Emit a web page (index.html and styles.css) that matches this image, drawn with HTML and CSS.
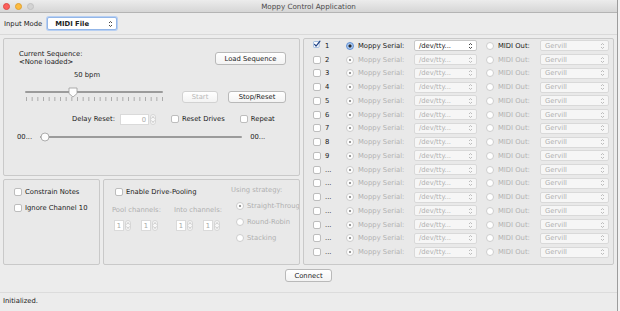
FILE: index.html
```html
<!DOCTYPE html>
<html lang="en">

<head>
    <meta charset="utf-8">
    <title>Moppy Control Application</title>
    <link rel="stylesheet" href="styles.css">
</head>

<body>
    <div class="window">
        <div class="titlebar">
            <div class="lights">
                <span class="light red"></span>
                <span class="light yellow"></span>
                <span class="light off"></span>
            </div>
            <div class="title">Moppy Control Application</div>
            <div></div>
        </div>

        <div class="toolbar">
            <span>Input Mode</span>
            <div class="select focus mode-select">
                <span>MIDI File</span>
                <svg class="arrows" width="5" height="8" viewBox="0 0 5 8"><path d="M1 3 L2.5 1.5 L4 3 M1 5 L2.5 6.5 L4 5" fill="none" stroke="#333" stroke-width="0.9"/></svg>
            </div>
        </div>

        <div class="main">
            <div class="left-col">
                <div class="panel seq-panel">
                    <div class="seq-row">
                        <div class="seq-name">
                            <div>Current Sequence:</div>
                            <div>&lt;None loaded&gt;</div>
                        </div>
                        <div class="btn load-btn">Load Sequence</div>
                    </div>
                    <div class="bpm">50 bpm</div>
                    <div class="tempo-row">
                        <svg class="tempo-slider" width="142" height="16" viewBox="0 0 142 16">
                            <line x1="2" y1="5" x2="138" y2="5" stroke="#9b9b9b" stroke-width="2" stroke-linecap="round"/>
                            <line x1="2" y1="12" x2="139" y2="12" stroke="#acacac" stroke-width="4" stroke-dasharray="1 4.667"/>
                            <path d="M45 1 H53 V6.5 L49 10 L45 6.5 Z" fill="#fdfdfd" stroke="#9a9a9a" stroke-width="0.8"/>
                        </svg>
                        <div class="btn start-btn disabled">Start</div>
                        <div class="btn stop-btn">Stop/Reset</div>
                    </div>
                    <div class="delay-row">
                        <span class="delay-label">Delay Reset:</span>
                        <div class="spin delay-spin">
                            <div class="val">0</div>
                            <div class="step">
                                <svg width="4" height="9" viewBox="0 0 4 9"><path d="M0.5 3.5 L2 1.5 L3.5 3.5 M0.5 5.5 L2 7.5 L3.5 5.5" fill="none" stroke="#bbb" stroke-width="0.8"/></svg>
                            </div>
                        </div>
                        <label class="check-item reset-drives"><span class="box"></span>Reset Drives</label>
                        <label class="check-item repeat"><span class="box"></span>Repeat</label>
                    </div>
                    <div class="pos-row">
                        <span>00...</span>
                        <svg class="pos-slider" width="204" height="10" viewBox="0 0 204 10">
                            <line x1="2" y1="5" x2="202" y2="5" stroke="#9b9b9b" stroke-width="2" stroke-linecap="round"/>
                            <circle cx="6" cy="5" r="4" fill="#fdfdfd" stroke="#9a9a9a" stroke-width="0.8"/>
                        </svg>
                        <span>00...</span>
                    </div>
                </div>

                <div class="bottom-row">
                    <div class="panel filter-panel">
                        <label class="check-item"><span class="box"></span>Constrain Notes</label>
                        <label class="check-item"><span class="box"></span>Ignore Channel 10</label>
                    </div>
                    <div class="panel pool-panel">
                        <div class="pool-left">
                            <label class="check-item"><span class="box"></span>Enable Drive-Pooling</label>
                            <div class="pool-heads">
                                <span>Pool channels:</span>
                                <span>Into channels:</span>
                            </div>
                            <div class="pool-spins">
                                <div class="spin-pair">
                                    <div class="spin"><div class="val">1</div><div class="step"><svg width="4" height="9" viewBox="0 0 4 9"><path d="M0.5 3.5 L2 1.5 L3.5 3.5 M0.5 5.5 L2 7.5 L3.5 5.5" fill="none" stroke="#bbb" stroke-width="0.8"/></svg></div></div>
                                    <div class="spin"><div class="val">1</div><div class="step"><svg width="4" height="9" viewBox="0 0 4 9"><path d="M0.5 3.5 L2 1.5 L3.5 3.5 M0.5 5.5 L2 7.5 L3.5 5.5" fill="none" stroke="#bbb" stroke-width="0.8"/></svg></div></div>
                                </div>
                                <div class="spin-pair">
                                    <div class="spin"><div class="val">1</div><div class="step"><svg width="4" height="9" viewBox="0 0 4 9"><path d="M0.5 3.5 L2 1.5 L3.5 3.5 M0.5 5.5 L2 7.5 L3.5 5.5" fill="none" stroke="#bbb" stroke-width="0.8"/></svg></div></div>
                                    <div class="spin"><div class="val">1</div><div class="step"><svg width="4" height="9" viewBox="0 0 4 9"><path d="M0.5 3.5 L2 1.5 L3.5 3.5 M0.5 5.5 L2 7.5 L3.5 5.5" fill="none" stroke="#bbb" stroke-width="0.8"/></svg></div></div>
                                </div>
                            </div>
                        </div>
                        <div class="pool-right">
                            <div>Using strategy:</div>
                            <label class="radio-item"><span class="radio dot"></span>Straight-Through</label>
                            <label class="radio-item"><span class="radio"></span>Round-Robin</label>
                            <label class="radio-item"><span class="radio"></span>Stacking</label>
                        </div>
                    </div>
                </div>
            </div>

            <div class="panel channels">
                <div class="channel-list"></div>
            </div>
        </div>

        <div class="connect-row">
            <div class="btn connect-btn">Connect</div>
        </div>

        <div class="status">Initialized.</div>
    </div>

    <script>
        const listArea = document.querySelector(".channel-list");
        const names = ["1", "2", "3", "4", "5", "6", "7", "8", "9", "...", "...", "...", "...", "...", "...", "..."];
        const arrowSvg = `<svg class="arrows" width="5" height="8" viewBox="0 0 5 8"><path d="M1 3 L2.5 1.5 L4 3 M1 5 L2.5 6.5 L4 5" fill="none" stroke="currentColor" stroke-width="0.9"/></svg>`;
        const tickSvg = `<svg width="11" height="11" viewBox="0 0 11 11"><rect x="0.5" y="1.5" width="8" height="8" rx="1.5" fill="#fff" stroke="#7fa6d8"/><path d="M2.2 5.2 L4.2 7.6 L9.6 0.8" fill="none" stroke="#1d3f82" stroke-width="1.6" stroke-linecap="round" stroke-linejoin="round"/></svg>`;

        // first channel is switched on, the rest are greyed out
        names.forEach((name, i) => {
            const row = document.createElement("div");
            row.classList.add("ch-row");
            if (i > 0) row.classList.add("disabled");
            const box = i == 0 ? `<span class="ticked">${tickSvg}</span>` : `<span class="box"></span>`;
            row.innerHTML = `
                <label class="ch-check">${box}<span>${name}</span></label>
                <span class="radio ${i == 0 ? "on" : "dot"}"></span>
                <span class="ch-label serial-label">Moppy Serial:</span>
                <div class="select serial-select ${i == 0 ? "" : "off"}"><span>/dev/tty...</span>${arrowSvg}</div>
                <span class="radio"></span>
                <span class="ch-label midi-label">MIDI Out:</span>
                <div class="select midi-select off"><span>Gervill</span>${arrowSvg}</div>`;
            listArea.append(row);
        });
    </script>
</body>

</html>
```

FILE: styles.css
```css
html {
    font-family: 'DejaVu Sans', 'Liberation Sans', sans-serif;
    font-size: 6.8px;
    color: #1a1a1a;
}

body {
    margin: 0px;
    background: #f2f2f2;
}

.window {
    width: 617px;
    height: 311px;
    background: #ececec;
    border-right: 1px solid #9c9c9c;
    display: flex;
    flex-direction: column;
}

.titlebar {
    height: 12px;
    display: grid;
    grid-template-columns: 1fr auto 1fr;
    align-items: center;
    background: linear-gradient(#ececec, #d6d6d6);
    border-bottom: 1px solid #b4b4b4;
}

.lights {
    display: flex;
    gap: 5px;
    padding-left: 3px;
}

.light {
    width: 7px;
    height: 7px;
    border-radius: 50%;
    box-sizing: border-box;
}

.red {
    background: #fc605c;
    border: 0.5px solid #de4a45;
}

.yellow {
    background: #fdbc40;
    border: 0.5px solid #dea032;
}

.off {
    background: #d3d3d3;
    border: 0.5px solid #c2c2c2;
}

.title {
    font-size: 7.2px;
    color: #4b4b4b;
}

.toolbar {
    height: 21px;
    display: flex;
    align-items: center;
    gap: 5px;
    padding-left: 4px;
    border-bottom: 1px solid #d9d9d9;
}

/* fake popup buttons */
.select {
    display: flex;
    align-items: center;
    justify-content: space-between;
    box-sizing: border-box;
    height: 11px;
    padding: 0px 3px 0px 4px;
    background: #fff;
    border: 1px solid #c9c9c9;
    border-radius: 2px;
    color: #222;
}

.select.off {
    background: #f6f6f6;
    border-color: #d9d9d9;
    color: #b0b0b0;
}

.mode-select {
    width: 70px;
    height: 13px;
    padding-left: 7px;
    font-weight: bold;
    border-color: #93b6e8;
    box-shadow: 0px 0px 0px 1px #b7cff2;
}

.main {
    display: flex;
    gap: 3px;
    padding: 3px 3px 0px 3px;
}

.left-col {
    width: 297px;
    display: flex;
    flex-direction: column;
    gap: 3px;
}

.panel {
    box-sizing: border-box;
    border: 1px solid #c9c9c9;
    border-radius: 2px;
    background: #e9e9e9;
}

.seq-panel {
    height: 138px;
    padding: 10px 13px 0px 15px;
}

.seq-row {
    display: flex;
    justify-content: space-between;
}

.seq-name {
    line-height: 8px;
    padding-top: 1px;
}

.btn {
    box-sizing: border-box;
    height: 12px;
    display: flex;
    align-items: center;
    justify-content: center;
    background: linear-gradient(#ffffff, #f3f3f3);
    border: 1px solid #b9b9b9;
    border-radius: 3px;
    color: #222;
}

.btn.disabled {
    color: #b8b8b8;
    border-color: #d2d2d2;
}

.load-btn {
    width: 71px;
    height: 13px;
    margin-top: 3px;
}

.bpm {
    margin: 5px 0px 0px 55px;
    line-height: 9px;
}

.tempo-row {
    display: flex;
    align-items: flex-start;
    margin-top: 7px;
}

.tempo-slider {
    margin-left: 5px;
}

.start-btn {
    width: 36px;
    margin: 4px 0px 0px 16px;
}

.stop-btn {
    width: 58px;
    margin: 4px 0px 0px 10px;
}

.delay-row {
    display: flex;
    align-items: center;
    height: 12px;
    margin-top: 10px;
}

.delay-label {
    margin-left: 53px;
    width: 48px;
}

.spin {
    display: flex;
    align-items: center;
    gap: 1px;
}

.spin .val {
    box-sizing: border-box;
    height: 11px;
    width: 10px;
    padding-right: 2px;
    text-align: right;
    line-height: 10px;
    background: #fff;
    border: 1px solid #dadada;
    color: #aaa;
}

.spin .step {
    box-sizing: border-box;
    width: 6px;
    height: 11px;
    display: flex;
    align-items: center;
    justify-content: center;
    border: 1px solid #d6d6d6;
    border-radius: 3px;
    background: #f7f7f7;
}

.delay-spin .val {
    width: 29px;
}

.check-item {
    display: flex;
    align-items: center;
    gap: 3px;
}

.box {
    box-sizing: border-box;
    width: 8px;
    height: 8px;
    background: #fff;
    border: 1px solid #bdbdbd;
    border-radius: 2px;
}

.reset-drives {
    margin-left: 15px;
}

.repeat {
    margin-left: 15px;
}

.pos-row {
    display: flex;
    align-items: center;
    gap: 7px;
    margin: 7px 0px 0px -2px;
}

.bottom-row {
    height: 86px;
    display: flex;
    gap: 3px;
}

.filter-panel {
    width: 97px;
    padding: 8px 0px 0px 10px;
    display: flex;
    flex-direction: column;
    gap: 8px;
}

.pool-panel {
    width: 197px;
    display: flex;
    padding: 6px 0px 0px 8px;
    overflow: hidden;
    white-space: nowrap;
}

.pool-left {
    width: 119px;
    flex-shrink: 0;
    padding-top: 2px;
}

.pool-left .check-item {
    margin-left: 3px;
}

.pool-heads {
    display: flex;
    gap: 13px;
    margin-top: 10px;
    color: #b0b0b0;
}

.pool-spins {
    display: flex;
    gap: 18px;
    margin: 6px 0px 0px 2px;
}

.spin-pair {
    display: flex;
    gap: 10px;
}

/* strategy list runs past the panel edge, as in the app */
.pool-right {
    display: flex;
    flex-direction: column;
    gap: 8px;
    color: #b0b0b0;
}

.radio-item {
    display: flex;
    align-items: center;
    gap: 3px;
    margin-left: 5px;
}

.radio {
    box-sizing: border-box;
    width: 8px;
    height: 8px;
    flex-shrink: 0;
    border-radius: 50%;
    background: #fff;
    border: 1px solid #cdcdcd;
}

.radio.dot {
    background: radial-gradient(circle, #9a9a9a 0px, #9a9a9a 1px, #fff 1.6px);
}

.radio.on {
    border-color: #5f8fd3;
    background: radial-gradient(circle, #2a2a2a 0px, #2a2a2a 1.2px, #a9c8f2 1.9px);
}

/* channel table */
.channels {
    width: 312px;
    height: 227px;
    padding: 0px 0px 0px 9px;
}

.ch-row {
    height: 13.75px;
    display: flex;
    align-items: center;
}

.ch-check {
    width: 33px;
    display: flex;
    align-items: center;
    gap: 4px;
}

.ticked {
    display: flex;
    width: 8px;
    height: 8px;
    align-items: flex-end;
}

.ticked svg {
    margin-top: -3px;
}

.ch-label {
    margin-left: 4px;
}

.serial-label {
    width: 56px;
}

.serial-select {
    width: 63px;
    margin-right: 9px;
}

.midi-label {
    width: 42px;
}

.midi-select {
    width: 69px;
}

.ch-row.disabled .ch-label {
    color: #b2b2b2;
}

.ch-row .select.off .arrows {
    color: #b5b5b5;
}

.select .arrows {
    color: #333;
}

.connect-row {
    height: 28px;
    display: flex;
    justify-content: center;
    align-items: flex-start;
    padding-top: 4px;
    box-sizing: border-box;
    border-bottom: 1px solid #dcdcdc;
}

.connect-btn {
    width: 47px;
    height: 13px;
}

.status {
    padding: 4px 0px 0px 3px;
}
```
